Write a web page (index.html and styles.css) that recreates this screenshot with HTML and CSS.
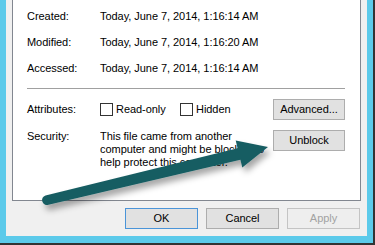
FILE: index.html
```html
<!DOCTYPE html>
<html>
<head>
<meta charset="utf-8">
<link rel="stylesheet" href="styles.css">
</head>
<body>
<div class="frame">
  <div class="client">
    <div class="panel">
      <div class="row"><span class="label">Created:</span><span class="value">Today, June 7, 2014, 1:16:14 AM</span></div>
      <div class="row"><span class="label">Modified:</span><span class="value">Today, June 7, 2014, 1:16:20 AM</span></div>
      <div class="row"><span class="label">Accessed:</span><span class="value">Today, June 7, 2014, 1:16:14 AM</span></div>
      <div class="sep"></div>
      <div class="grid attr">
        <span class="label">Attributes:</span>
        <div class="checks">
          <label class="check first"><span class="box"></span>Read-only</label>
          <label class="check"><span class="box"></span>Hidden</label>
        </div>
        <button class="btn side">Advanced...</button>
      </div>
      <div class="grid sec">
        <span class="label">Security:</span>
        <div class="sectext">This file came from another<br>computer and might be blocked to<br>help protect this computer.</div>
        <button class="btn side">Unblock</button>
      </div>
    </div>
    <div class="footer">
      <button class="btn foot default">OK</button>
      <button class="btn foot">Cancel</button>
      <button class="btn foot disabled">Apply</button>
    </div>
  </div>
</div>
<svg class="arrow" width="375" height="245" viewBox="0 0 375 245">
  <defs>
    <filter id="sh" x="-20%" y="-50%" width="140%" height="200%">
      <feDropShadow dx="3" dy="5" stdDeviation="3" flood-color="#000" flood-opacity="0.35"/>
    </filter>
  </defs>
  <path filter="url(#sh)" fill="#195d62" d="M45.5,195.4 L237.6,148.2 L235.7,140.4 L268,147 L242.3,167.6 L240.4,159.8 L48.5,204.8 A4.8,4.8 0 0 1 45.5,195.4 Z"/>
</svg>
</body>
</html>
```
FILE: styles.css
```css
* { box-sizing: border-box; }
html, body { margin: 0; padding: 0; }
body {
  width: 375px;
  height: 245px;
  overflow: hidden;
  background: #5ccaea;
  font-family: "Liberation Sans", Arial, sans-serif;
  font-size: 11px;
  letter-spacing: -0.05px;
  color: #000;
  position: relative;
}
.frame {
  width: 375px;
  height: 245px;
  padding: 0 6px 7px 6px;
  border-right: 2px solid #333;
  border-bottom: 2px solid #333;
}
.client {
  background: #f0f0f0;
  height: 236px;
  padding: 0 6px 0 6px;
  display: flex;
  flex-direction: column;
}
.panel {
  background: #fff;
  border: 1px solid #828790;
  border-top: none;
  padding: 10px 15px 31px 14px;
  display: flex;
  flex-direction: column;
}
.row {
  display: flex;
  line-height: 13px;
  height: 13px;
  margin-bottom: 13px;
}
.label { width: 73px; flex: none; line-height: 13px; }
.value { line-height: 13px; }
.sep {
  height: 1px;
  background: #a0a0a0;
  margin-bottom: 10px;
}
.grid {
  display: grid;
  grid-template-columns: 73px 1fr 72px;
}
.attr { align-items: center; height: 21px; margin-bottom: 10px; }
.sec { align-items: start; }
.checks { display: flex; align-items: center; }
.check { display: flex; align-items: center; line-height: 13px; }
.check.first { width: 80px; }
.box {
  width: 13px;
  height: 13px;
  border: 1px solid #333;
  background: #fff;
  margin-right: 3px;
  flex: none;
}
.sectext {
  line-height: 13px;
  white-space: nowrap;
  overflow: hidden;
}
.btn {
  font-family: "Liberation Sans", Arial, sans-serif;
  font-size: 11px;
  letter-spacing: -0.05px;
  color: #000;
  background: #e1e1e1;
  border: 1px solid #adadad;
  height: 21px;
  padding: 0;
  margin: 0;
  line-height: 19px;
  text-align: center;
}
.side { width: 72px; }
.footer {
  display: flex;
  justify-content: flex-end;
  gap: 8px;
  padding: 7px 1px 0 0;
}
.foot { width: 73px; }
.default { border-color: #4a94d8; }
.disabled {
  background: #eeeeee;
  border-color: #c4c4c4;
  color: #a2a2a2;
}
.arrow {
  position: absolute;
  left: 0;
  top: 0;
  pointer-events: none;
}
```
